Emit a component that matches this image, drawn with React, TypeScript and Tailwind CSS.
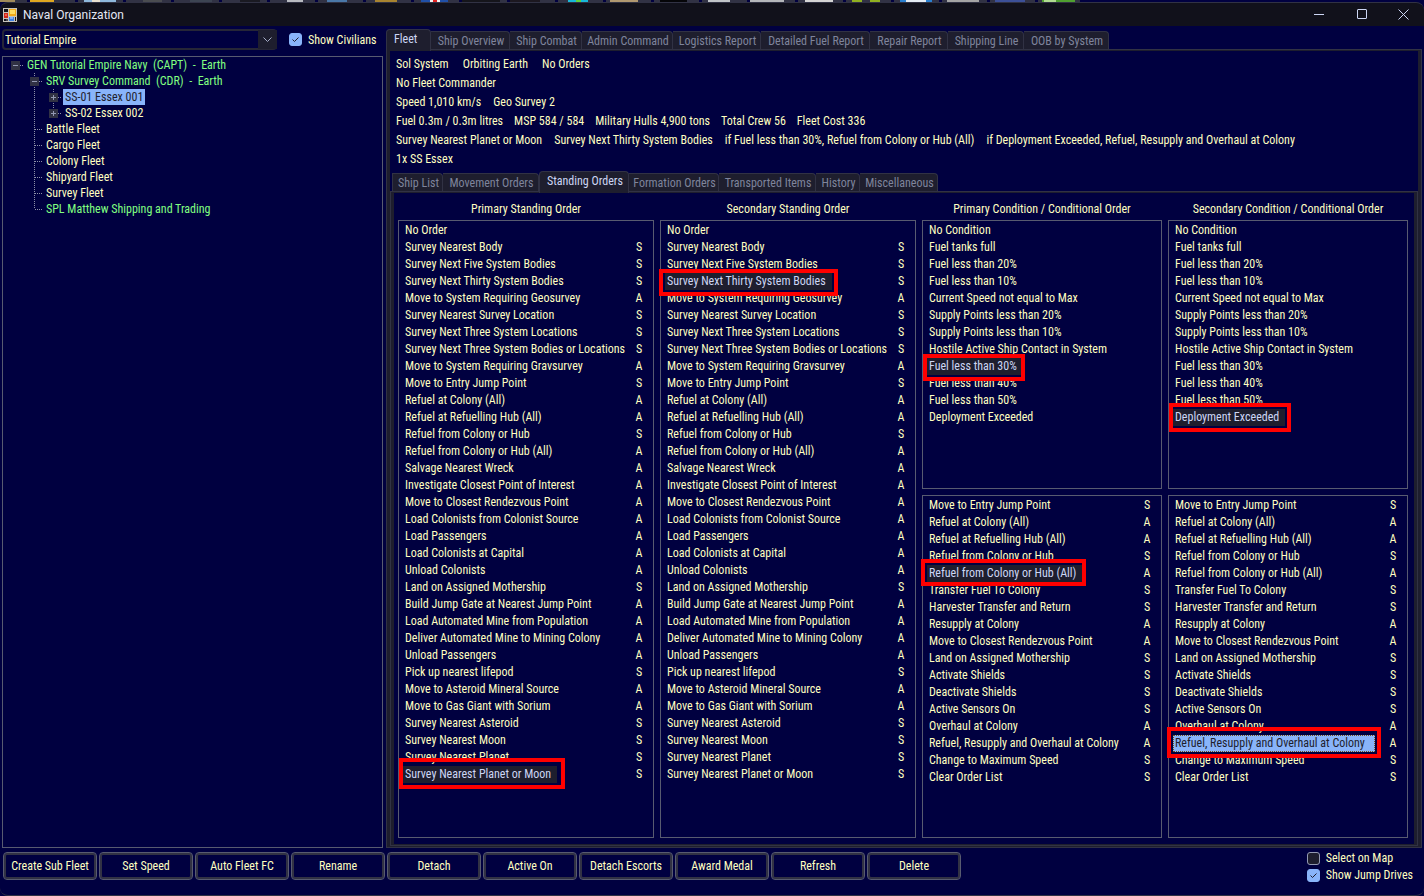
import React from "react";

type Order = [name: string, scope: "" | "S" | "A"];

const standingOrders: Order[] = [
  ["No Order", ""],
  ["Survey Nearest Body", "S"],
  ["Survey Next Five System Bodies", "S"],
  ["Survey Next Thirty System Bodies", "S"],
  ["Move to System Requiring Geosurvey", "A"],
  ["Survey Nearest Survey Location", "S"],
  ["Survey Next Three System Locations", "S"],
  ["Survey Next Three System Bodies or Locations", "S"],
  ["Move to System Requiring Gravsurvey", "A"],
  ["Move to Entry Jump Point", "S"],
  ["Refuel at Colony (All)", "A"],
  ["Refuel at Refuelling Hub (All)", "A"],
  ["Refuel from Colony or Hub", "S"],
  ["Refuel from Colony or Hub (All)", "A"],
  ["Salvage Nearest Wreck", "A"],
  ["Investigate Closest Point of Interest", "A"],
  ["Move to Closest Rendezvous Point", "A"],
  ["Load Colonists from Colonist Source", "A"],
  ["Load Passengers", "A"],
  ["Load Colonists at Capital", "A"],
  ["Unload Colonists", "A"],
  ["Land on Assigned Mothership", "S"],
  ["Build Jump Gate at Nearest Jump Point", "A"],
  ["Load Automated Mine from Population", "A"],
  ["Deliver Automated Mine to Mining Colony", "A"],
  ["Unload Passengers", "A"],
  ["Pick up nearest lifepod", "S"],
  ["Move to Asteroid Mineral Source", "A"],
  ["Move to Gas Giant with Sorium", "A"],
  ["Survey Nearest Asteroid", "S"],
  ["Survey Nearest Moon", "S"],
  ["Survey Nearest Planet", "S"],
  ["Survey Nearest Planet or Moon", "S"],
];

const conditions: Order[] = [
  ["No Condition", ""],
  ["Fuel tanks full", ""],
  ["Fuel less than 20%", ""],
  ["Fuel less than 10%", ""],
  ["Current Speed not equal to Max", ""],
  ["Supply Points less than 20%", ""],
  ["Supply Points less than 10%", ""],
  ["Hostile Active Ship Contact in System", ""],
  ["Fuel less than 30%", ""],
  ["Fuel less than 40%", ""],
  ["Fuel less than 50%", ""],
  ["Deployment Exceeded", ""],
];

const conditionalOrders: Order[] = [
  ["Move to Entry Jump Point", "S"],
  ["Refuel at Colony (All)", "A"],
  ["Refuel at Refuelling Hub (All)", "A"],
  ["Refuel from Colony or Hub", "S"],
  ["Refuel from Colony or Hub (All)", "A"],
  ["Transfer Fuel To Colony", "S"],
  ["Harvester Transfer and Return", "S"],
  ["Resupply at Colony", "A"],
  ["Move to Closest Rendezvous Point", "A"],
  ["Land on Assigned Mothership", "S"],
  ["Activate Shields", "S"],
  ["Deactivate Shields", "S"],
  ["Active Sensors On", "S"],
  ["Overhaul at Colony", "A"],
  ["Refuel, Resupply and Overhaul at Colony", "A"],
  ["Change to Maximum Speed", "S"],
  ["Clear Order List", "S"],
];

type Guide = "gap" | "line" | "plus" | "plusLast" | "minus" | "minusTop" | "tee" | "elbow";

const fleetTree: { guides: Guide[]; label: string; kind: "admin" | "fleet"; selected?: boolean }[] = [
  { guides: ["minusTop"], label: "GEN Tutorial Empire Navy  (CAPT)  -  Earth", kind: "admin" },
  { guides: ["gap", "minus"], label: "SRV Survey Command  (CDR)  -  Earth", kind: "admin" },
  { guides: ["gap", "line", "plus"], label: "SS-01 Essex 001", kind: "fleet", selected: true },
  { guides: ["gap", "line", "plusLast"], label: "SS-02 Essex 002", kind: "fleet" },
  { guides: ["gap", "tee"], label: "Battle Fleet", kind: "fleet" },
  { guides: ["gap", "tee"], label: "Cargo Fleet", kind: "fleet" },
  { guides: ["gap", "tee"], label: "Colony Fleet", kind: "fleet" },
  { guides: ["gap", "tee"], label: "Shipyard Fleet", kind: "fleet" },
  { guides: ["gap", "tee"], label: "Survey Fleet", kind: "fleet" },
  { guides: ["gap", "elbow"], label: "SPL Matthew Shipping and Trading", kind: "admin" },
];

const fleetTabs: [string, string][] = [
  ["Fleet", "w-[45px]"],
  ["Ship Overview", "w-[79px]"],
  ["Ship Combat", "w-[72px]"],
  ["Admin Command", "w-[91px]"],
  ["Logistics Report", "w-[88px]"],
  ["Detailed Fuel Report", "w-[109px]"],
  ["Repair Report", "w-[78px]"],
  ["Shipping Line", "w-[76px]"],
  ["OOB by System", "w-[85px]"],
];

const orderTabs: [string, string][] = [
  ["Ship List", "w-[51px]"],
  ["Movement Orders", "w-[96px]"],
  ["Standing Orders", "w-[90px]"],
  ["Formation Orders", "w-[90px]"],
  ["Transported Items", "w-[97px]"],
  ["History", "w-[44px]"],
  ["Miscellaneous", "w-[78px]"],
];

const summary: { gap: string; items: string[] }[] = [
  { gap: "gap-3.5", items: ["Sol System", "Orbiting Earth", "No Orders"] },
  { gap: "gap-3", items: ["No Fleet Commander"] },
  { gap: "gap-3", items: ["Speed 1,010 km/s", "Geo Survey 2"] },
  {
    gap: "gap-[11px]",
    items: ["Fuel 0.3m / 0.3m litres", "MSP 584 / 584", "Military Hulls 4,900 tons", "Total Crew 56", "Fleet Cost 336"],
  },
  {
    gap: "gap-3",
    items: [
      "Survey Nearest Planet or Moon",
      "Survey Next Thirty System Bodies",
      "if Fuel less than 30%, Refuel from Colony or Hub (All)",
      "if Deployment Exceeded, Refuel, Resupply and Overhaul at Colony",
    ],
  },
  { gap: "gap-3", items: ["1x SS Essex"] },
];

const actions = [
  "Create Sub Fleet",
  "Set Speed",
  "Auto Fleet FC",
  "Rename",
  "Detach",
  "Active On",
  "Detach Escorts",
  "Award Medal",
  "Refresh",
  "Delete",
];

const toolbarBlobs: [x: number, width: number, color: string][] = [
  [0, 15, "#a08a5a"], [30, 24, "#e0a820"], [84, 32, "#8fb8dc"], [92, 8, "#e8e0d0"], [143, 19, "#4a4c50"],
  [190, 22, "#3c4452"], [240, 20, "#1a1a22"], [287, 16, "#b8bac0"], [327, 20, "#4a78a8"], [375, 22, "#a88430"],
  [421, 27, "#2050a8"], [430, 10, "#f0f0f0"], [433, 4, "#e02020"], [462, 38, "#15151b"], [510, 30, "#1c1820"],
  [568, 20, "#18b8d8"], [576, 5, "#60d040"], [610, 28, "#b09870"], [660, 27, "#050508"], [708, 22, "#c0c4c8"],
  [750, 34, "#b4b6ba"], [805, 28, "#d4d4d4"], [852, 10, "#90b020"], [870, 10, "#90b020"], [900, 32, "#2a80d0"],
  [906, 20, "#e4ecf4"], [947, 32, "#a4a4a4"], [995, 30, "#3c5098"], [1042, 33, "#50a030"], [1044, 12, "#b0dc90"],
];

function ToolbarStrip() {
  return (
    <svg aria-hidden="true" className="block h-0.5 w-[1080px]" viewBox="0 0 1080 2" shapeRendering="crispEdges">
      <rect width="1080" height="2" fill="#313244" />
      {Array.from({ length: 22 }, (_, i) => (
        <rect key={i} x={27 + i * 48} width="3" height="2" fill="#000040" />
      ))}
      {toolbarBlobs.map(([x, width, fill]) => (
        <rect key={x} x={x} width={width} height="2" fill={fill} />
      ))}
    </svg>
  );
}

function AppIcon() {
  return (
    <svg aria-hidden="true" className="size-[14px]" viewBox="0 0 14 14" shapeRendering="crispEdges">
      <rect width="14" height="14" fill="#c8c4bc" />
      <rect x="1" y="1" width="4" height="3" fill="#14141c" />
      <rect x="1" y="5" width="4" height="5" fill="#d02818" />
      <rect x="2" y="6" width="2" height="2" fill="#f06050" />
      <rect x="1" y="11" width="2" height="2" fill="#14141c" />
      <rect x="3" y="11" width="2" height="2" fill="#48484c" />
      <rect x="6" y="1" width="7" height="7" fill="#f0a818" />
      <rect x="7" y="2" width="5" height="4" fill="#ffdc60" />
      <rect x="6" y="9" width="5" height="4" fill="#4080e0" />
      <rect x="7" y="9" width="3" height="2" fill="#80b0f8" />
      <rect x="12" y="9" width="1" height="4" fill="#14141c" />
    </svg>
  );
}

function TitleBar() {
  const control = "flex h-full w-[42px] items-center justify-center text-[#cdd6f4]";
  return (
    <header className="flex h-6 items-center rounded-t-lg border-t border-[#313244] bg-[#11111b] pl-[3px]">
      <AppIcon />
      <h1 className="ml-1.5 flex-1 font-[Roboto,sans-serif] text-xs text-[#e4e8f4]">Naval Organization</h1>
      <button type="button" aria-label="Minimize" className={control}>
        <svg className="size-[11px]" viewBox="0 0 11 11" stroke="currentColor"><path d="M0 5.5h10" /></svg>
      </button>
      <button type="button" aria-label="Maximize" className={control}>
        <svg className="size-[11px]" viewBox="0 0 11 11" fill="none" stroke="currentColor">
          <rect x="1.5" y="0.5" width="9" height="9" rx="0.5" />
        </svg>
      </button>
      <button type="button" aria-label="Close" className={control}>
        <svg className="size-[11px]" viewBox="0 0 11 11" stroke="currentColor"><path d="M0.5 0.5l10 10M10.5 0.5l-10 10" /></svg>
      </button>
    </header>
  );
}

function CheckBox({ label, checked }: { label: string; checked?: boolean }) {
  return (
    <label className="flex items-center gap-1.5">
      <span className="grid size-[13px] place-items-center">
        <input
          type="checkbox"
          defaultChecked={checked}
          className="peer col-start-1 row-start-1 size-[13px] appearance-none rounded-[3px] border border-[#9399b2] bg-[#1e1e2e] checked:border-[#89b4fa] checked:bg-[#89b4fa]"
        />
        <svg
          aria-hidden="true"
          className="pointer-events-none col-start-1 row-start-1 hidden size-[13px] peer-checked:block"
          viewBox="0 0 13 13"
          fill="none"
          stroke="#1e1e2e"
        >
          <path d="M3.5 6.5l2 2 4-4" />
        </svg>
      </span>
      {label}
    </label>
  );
}

function TreeGuide({ guide, last }: { guide: Guide; last: boolean }) {
  const expander = guide === "plus" || guide === "plusLast" || guide === "minus" || guide === "minusTop";
  const above = guide !== "gap" && guide !== "minusTop";
  const below = guide === "line" || guide === "plus" || guide === "minus" || guide === "tee";
  const across = guide !== "gap" && guide !== "line";
  const plus = guide === "plus" || guide === "plusLast";
  return (
    <svg
      aria-hidden="true"
      className={last ? "h-4 w-[14px] shrink-0" : "h-4 w-[19px] shrink-0"}
      viewBox={last ? "0 0 14 16" : "0 0 19 16"}
      shapeRendering="crispEdges"
    >
      <g stroke="#8c90a8" strokeDasharray="1 1">
        {above && <path d="M4.5 0v8" />}
        {below && <path d="M4.5 8v8" />}
        {across && <path d="M5 8.5h8" />}
      </g>
      {expander && (
        <>
          <rect x="0" y="4" width="9" height="9" fill="#313244" />
          <path d={plus ? "M2 8.5h5M4.5 6v5" : "M2 8.5h5"} stroke="#9399b2" />
        </>
      )}
    </svg>
  );
}

function FleetTree() {
  return (
    <ul role="tree" aria-label="Fleets" className="flex-1 border border-[#585b70] pl-2">
      {fleetTree.map(({ guides, label, kind, selected }) => (
        <li
          key={label}
          role="treeitem"
          aria-level={guides.length}
          aria-selected={!!selected}
          className={kind === "admin" ? "flex h-4 text-[#80ff80]" : "flex h-4"}
        >
          {guides.map((guide, i) => (
            <TreeGuide key={i} guide={guide} last={i === guides.length - 1} />
          ))}
          <span className={selected ? "bg-[#89b4fa] px-0.5 whitespace-pre text-[#1e1e2e]" : "px-0.5 whitespace-pre"}>
            {label}
          </span>
        </li>
      ))}
    </ul>
  );
}

function TabStrip({ tabs, active, label }: { tabs: [string, string][]; active: string; label: string }) {
  return (
    <div role="tablist" aria-label={label} className="flex h-5 items-end">
      {tabs.map(([name, width]) => (
        <button
          key={name}
          type="button"
          role="tab"
          aria-selected={name === active}
          className={
            name === active
              ? `${width} relative -mb-0.5 h-[22px] rounded-t-sm border border-b-0 border-[#313244] bg-[#1e1e2e] pb-1 pl-[7px] text-left whitespace-nowrap text-[#cdd6f4]`
              : `${width} h-[18px] rounded-tr-sm border-t border-r border-[#313244] bg-[#1e1e2e] pl-0.5 whitespace-nowrap text-[#7f849c] first:border-l`
          }
        >
          {name}
        </button>
      ))}
    </div>
  );
}

type Mark = { name: string; tone: "dim" | "focus"; box: string };

function OrderList({ orders, label, mark, className }: { orders: Order[]; label: string; mark?: Mark; className: string }) {
  return (
    <ul role="listbox" aria-label={label} className={`${className} border border-[#585b70] pt-px pr-2.5 pl-1.5`}>
      {orders.map(([name, scope]) => {
        const marked = mark?.name === name;
        return (
          <li key={name} role="option" aria-selected={marked} className="flex h-[17px] justify-between leading-[17px] whitespace-nowrap">
            {marked ? (
              <span
                className={
                  mark.tone === "focus"
                    ? "relative -ml-0.5 bg-[#89b4fa] pr-2.5 pl-0.5 text-[#1e1e2e] outline-1 -outline-offset-1 outline-[#76521c] outline-dotted"
                    : "relative -ml-0.5 bg-[#1e1e2e] pr-1.5 pl-0.5 text-[#cdd6f4]"
                }
              >
                {name}
                <span aria-hidden="true" className={`${mark.box} pointer-events-none absolute border-4 border-[#ff0000]`} />
              </span>
            ) : (
              <span>{name}</span>
            )}
            <span className="w-2 text-center">{scope}</span>
          </li>
        );
      })}
    </ul>
  );
}

function Column({ title, children }: { title: string; children: React.ReactNode }) {
  return (
    <section className="flex flex-col gap-1.5">
      <h2 className="-mb-[3px] h-4 text-center">{title}</h2>
      {children}
    </section>
  );
}

function StandingOrders() {
  return (
    <div className="grid flex-1 grid-cols-[256fr_256fr_240fr_240fr] gap-1.5 bg-[#000040] pt-2 pr-1.5 pb-1.5 pl-1">
      <Column title="Primary Standing Order">
        <OrderList
          className="flex-1"
          label="Primary standing order"
          orders={standingOrders}
          mark={{ name: "Survey Nearest Planet or Moon", tone: "dim", box: "-top-2 -right-2 -bottom-1.5 -left-1" }}
        />
      </Column>
      <Column title="Secondary Standing Order">
        <OrderList
          className="flex-1"
          label="Secondary standing order"
          orders={standingOrders}
          mark={{ name: "Survey Next Thirty System Bodies", tone: "dim", box: "-top-1 -right-1.5 -bottom-1.5 -left-1.5" }}
        />
      </Column>
      <Column title="Primary Condition / Conditional Order">
        <OrderList
          className="h-[269px]"
          label="Primary condition"
          orders={conditions}
          mark={{ name: "Fuel less than 30%", tone: "dim", box: "-top-1 -right-0.5 -bottom-1.5 -left-1" }}
        />
        <OrderList
          className="flex-1"
          label="Primary conditional order"
          orders={conditionalOrders}
          mark={{ name: "Refuel from Colony or Hub (All)", tone: "dim", box: "-top-1.5 -right-1 -bottom-1 -left-1.5" }}
        />
      </Column>
      <Column title="Secondary Condition / Conditional Order">
        <OrderList
          className="h-[269px]"
          label="Secondary condition"
          orders={conditions}
          mark={{ name: "Deployment Exceeded", tone: "dim", box: "-top-1.5 -right-1.5 -bottom-1.5 -left-1" }}
        />
        <OrderList
          className="flex-1"
          label="Secondary conditional order"
          orders={conditionalOrders}
          mark={{ name: "Refuel, Resupply and Overhaul at Colony", tone: "focus", box: "-top-2 -right-1.5 -bottom-1.5 -left-1.5" }}
        />
      </Column>
    </div>
  );
}

export default function App() {
  return (
    <div className="flex min-h-screen flex-col overflow-x-hidden bg-[#000040] font-['Roboto_Condensed',Roboto,sans-serif] text-xs leading-4 text-[#ffffc0]">
      <ToolbarStrip />
      <TitleBar />
      <div className="flex flex-1 flex-col rounded-b-lg border-b border-[#313244]">
        <main className="grid flex-1 grid-cols-[381px_1fr] gap-[3px] px-0.5 pt-[3px]">
          <div className="flex flex-col">
            <div className="mb-[6px] flex items-center gap-3">
              <div className="grid w-[275px] items-center">
                <select
                  aria-label="Empire"
                  className="col-start-1 row-start-1 h-[21px] appearance-none rounded-sm border-2 border-[#262637] bg-[#000040] pl-px"
                >
                  <option>Tutorial Empire</option>
                </select>
                <span
                  aria-hidden="true"
                  className="pointer-events-none col-start-1 row-start-1 flex h-[19px] w-[19px] items-center justify-center justify-self-end bg-[#1e1e2e]"
                >
                  <svg className="size-[9px]" viewBox="0 0 9 9" fill="none" stroke="#a6adc8"><path d="M0.5 2.5l4 4 4-4" /></svg>
                </span>
              </div>
              <CheckBox label="Show Civilians" checked />
            </div>
            <FleetTree />
          </div>

          <div className="flex flex-col">
            <TabStrip label="Fleet views" tabs={fleetTabs} active="Fleet" />
            <div className="flex flex-1 flex-col border border-[#313244] bg-[#1e1e2e] px-[3px] pt-px pb-px">
              <div className="flex flex-1 flex-col bg-[#000040]">
                <div className="pt-1 pb-0.5 pl-1.5">
                  {summary.map(({ gap, items }) => (
                    <p key={items[0]} className={`${gap} flex leading-[19px] whitespace-nowrap`}>
                      {items.map((item) => (
                        <span key={item}>{item}</span>
                      ))}
                    </p>
                  ))}
                </div>
                <div className="pl-0.5">
                  <TabStrip label="Order views" tabs={orderTabs} active="Standing Orders" />
                </div>
                <div className="flex flex-1 flex-col border border-[#313244] bg-[#1e1e2e] px-[3px] pt-px pb-px">
                  <StandingOrders />
                </div>
              </div>
            </div>
          </div>
        </main>

        <footer className="flex items-start justify-between pt-1 pr-[11px] pb-3 pl-[3px]">
          <div className="flex gap-0.5">
            {actions.map((action) => (
              <button
                key={action}
                type="button"
                className="h-7 w-[94px] rounded-sm border border-[#585b70] whitespace-nowrap inset-ring-2 inset-ring-[#313244]"
              >
                {action}
              </button>
            ))}
          </div>
          <div className="-mt-0.5 flex flex-col gap-px">
            <CheckBox label="Select on Map" />
            <CheckBox label="Show Jump Drives" checked />
          </div>
        </footer>
      </div>
    </div>
  );
}
